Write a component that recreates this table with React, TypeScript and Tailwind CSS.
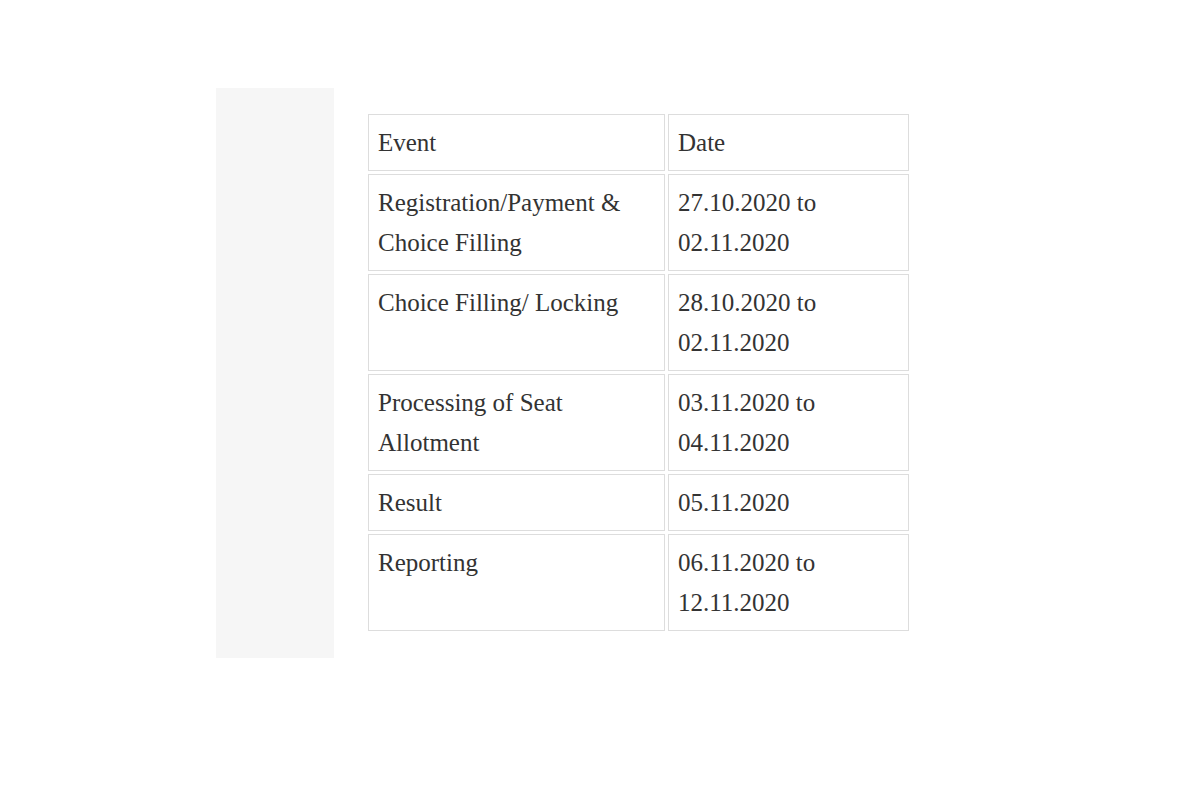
import React from 'react';

type Row = {
  event: string[];
  date: string[];
};

const rows: Row[] = [
  { event: ['Registration/Payment &', 'Choice Filling'], date: ['27.10.2020 to', '02.11.2020'] },
  { event: ['Choice Filling/ Locking'], date: ['28.10.2020 to', '02.11.2020'] },
  { event: ['Processing of Seat', 'Allotment'], date: ['03.11.2020 to', '04.11.2020'] },
  { event: ['Result'], date: ['05.11.2020'] },
  { event: ['Reporting'], date: ['06.11.2020 to', '12.11.2020'] }
];

const cell = 'border border-[#dddddd] align-top pl-[9px] pr-2 pt-2 pb-[7px] whitespace-nowrap';

export default function App() {
  return (
    <div
      className="min-h-[800px] bg-white flex items-start pt-[88px] pl-[216px] text-[#333333]"
      style={{ fontFamily: '"Liberation Serif", "Times New Roman", serif' }}
    >
      {/* left sidebar strip */}
      <div className="w-[118px] h-[570px] bg-[#f6f6f6] shrink-0"></div>

      <table className="ml-[31px] mt-[23px] w-[547px] table-fixed border-separate border-spacing-[3px] text-[25px] leading-[40px]">
        <colgroup>
          <col className="w-[297px]" />
          <col />
        </colgroup>
        <tbody>
          <tr>
            <td className={cell}>Event</td>
            <td className={cell}>Date</td>
          </tr>
          {rows.map((row, i) => (
            <tr key={i}>
              <td className={cell}>
                {row.event.map((line, j) => (
                  <div key={j}>{line}</div>
                ))}
              </td>
              <td className={cell}>
                {row.date.map((line, j) => (
                  <div key={j}>{line}</div>
                ))}
              </td>
            </tr>
          ))}
        </tbody>
      </table>
    </div>
  );
}
